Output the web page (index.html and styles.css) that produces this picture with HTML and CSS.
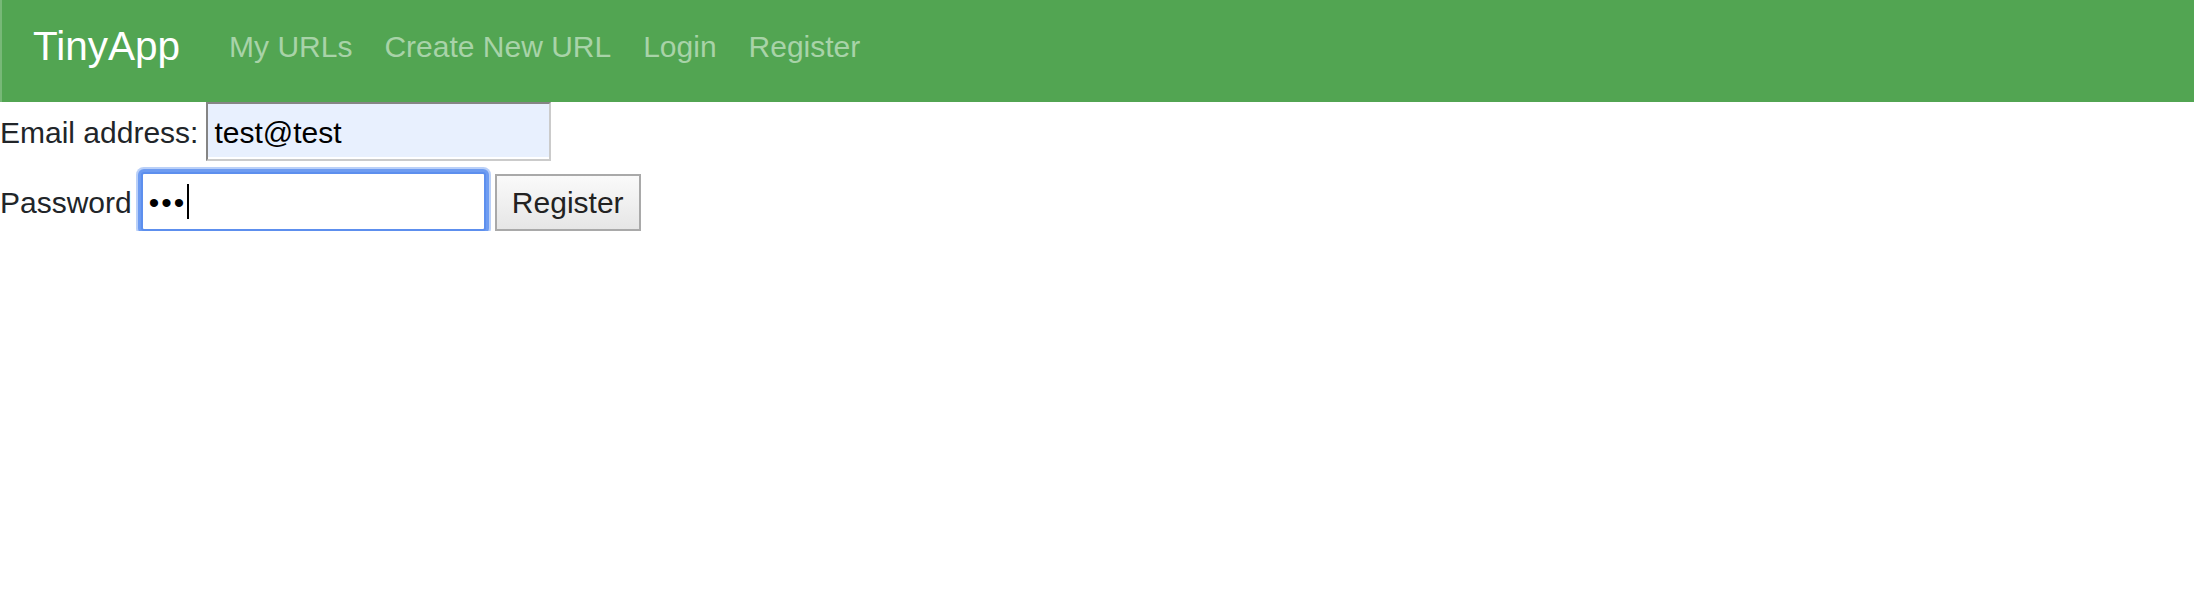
FILE: index.html
```html
<!DOCTYPE html>
<html lang="en">
<head>
<meta charset="utf-8">
<title>TinyApp</title>
<link rel="stylesheet" href="styles.css">
</head>
<body>
<nav class="navbar">
  <a class="brand" href="#">TinyApp</a>
  <ul class="nav-links">
    <li><a class="nav-link" href="#">My URLs</a></li>
    <li><a class="nav-link" href="#">Create New URL</a></li>
    <li><a class="nav-link" href="#">Login</a></li>
    <li><a class="nav-link" href="#">Register</a></li>
  </ul>
</nav>
<form class="register-form" action="#">
  <div class="form-row">
    <label class="form-label" for="email">Email address:</label>
    <input class="field field-autofill" id="email" type="text" name="email" value="test@test">
  </div>
  <div class="form-row form-row-second">
    <label class="form-label" for="password">Password</label>
    <span class="field-wrap">
      <input class="field field-focus" id="password" type="password" name="password" value="abc" autofocus>
      <span class="caret"></span>
    </span>
    <button class="submit-btn" type="submit">Register</button>
  </div>
</form>
</body>
</html>
```

FILE: styles.css
```css
html, body {
  margin: 0;
  padding: 0;
  background: #ffffff;
}

body {
  font-family: "Liberation Sans", Arial, sans-serif;
  font-size: 30px;
  color: #212529;
}

.navbar {
  display: flex;
  align-items: flex-start;
  height: 102px;
  box-sizing: border-box;
  padding-left: 31px;
  background: #52a552;
  border-left: 2px solid #78b878;
}

.brand {
  display: block;
  margin-top: 26px;
  margin-right: 33px;
  font-size: 40.5px;
  line-height: 1;
  color: #ffffff;
  text-decoration: none;
}

.nav-links {
  display: flex;
  margin: 32px 0 0 0;
  padding: 0;
  list-style: none;
}

.nav-link {
  display: block;
  padding: 0 16px;
  font-size: 30px;
  line-height: 1;
  color: #a8d3a8;
  text-decoration: none;
}

.register-form {
  margin: 0;
}

.form-row {
  display: flex;
  align-items: baseline;
}

.form-row-second {
  margin-top: 11px;
}

.form-label {
  line-height: 1;
  color: #212529;
}

.field {
  box-sizing: border-box;
  width: 345px;
  height: 59px;
  margin: 0 0 0 8px;
  padding: 2px 6px 0 6px;
  font-family: "Liberation Sans", Arial, sans-serif;
  font-size: 30px;
  color: #000000;
  outline: none;
}

.field-autofill {
  margin-left: 8px;
  background: #e8f0fe;
  border-top: 2px solid #858585;
  border-left: 2px solid #858585;
  border-bottom: 2px solid #cbcbcb;
  border-right: 2px solid #cbcbcb;
  box-shadow: inset 0 -2px 0 #ffffff;
}

.field-wrap {
  position: relative;
  display: inline-block;
  margin-left: 9px;
}

.field-focus {
  display: block;
  margin-left: 0;
  background: #ffffff;
  border: 2px solid #5d8fee;
  border-radius: 3px;
  box-shadow: 0 0 0 3px #6e9cf1, 0 0 0 5px #bad0f8;
  letter-spacing: 2px;
  caret-color: transparent;
}

.field-focus:focus {
  outline: none;
}

.caret {
  position: absolute;
  left: 46px;
  top: 12px;
  width: 2px;
  height: 35px;
  background: #000000;
}

.submit-btn {
  box-sizing: border-box;
  width: 146px;
  height: 57px;
  margin-left: 9px;
  padding: 0 15px;
  font-family: "Liberation Sans", Arial, sans-serif;
  font-size: 30px;
  color: #222222;
  background: linear-gradient(#fafafa, #e6e6e6);
  border: 2px solid #a9a9a9;
  border-radius: 0;
}
```
